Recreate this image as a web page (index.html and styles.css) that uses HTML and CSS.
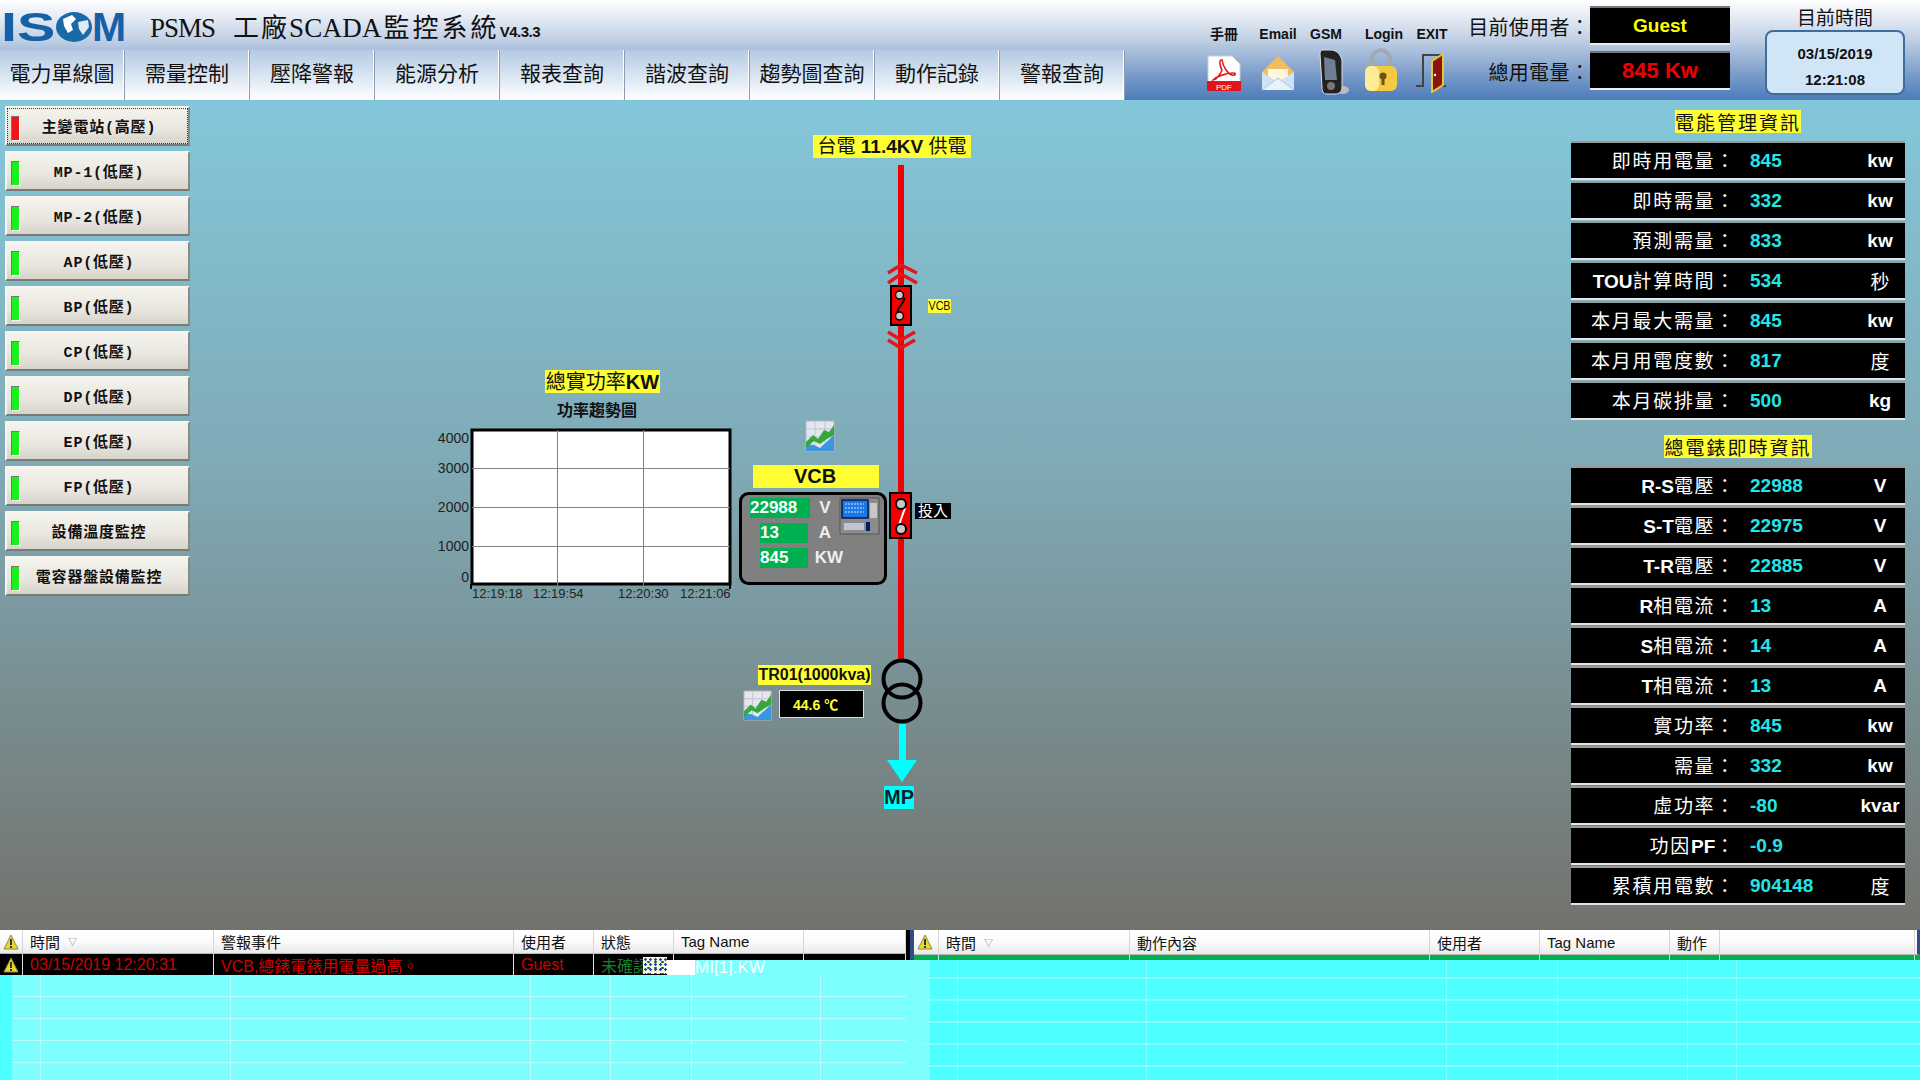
FILE: index.html
```html
<!DOCTYPE html>
<html lang="zh-Hant">
<head>
    <meta charset="UTF-8">
    <meta name="viewport" content="width=device-width, initial-scale=1.0">
    <title>PSMS 工廠SCADA監控系統</title>
    <link rel="stylesheet" href="styles.css">
</head>
<body>
    <svg class="defs" width="0" height="0">
        <symbol id="trend" viewBox="0 0 30 32">
            <rect x="1" y="1" width="28" height="30" fill="#e6e6f0" stroke="#b5b8c0"/>
            <path d="M1 9H29M1 17H29M10 1V31M20 1V31" stroke="#c2c4d6" stroke-width="1"/>
            <path d="M1 31V24L9 25L15 28L29 15V31Z" fill="#3b97dd"/>
            <path d="M1 22L8 15L13 19L19 10L24 12L29 5V15L22 19L15 24L9 21L1 28Z" fill="#35a83a"/>
        </symbol>
        <symbol id="warn" viewBox="0 0 16 16">
            <path d="M8 1L15 15H1Z" fill="#e8d92c" stroke="#8f8a3a"/>
            <rect x="7" y="5" width="2" height="6" fill="#333"/>
            <rect x="7" y="12" width="2" height="2" fill="#333"/>
        </symbol>
    </svg>

    <header class="topbar">
        <div class="topbar-left">
            <div class="brand">
                <div class="logo">
                    <span class="logo-is">IS</span>
                    <svg class="logo-globe" viewBox="0 0 38 32" width="38" height="32">
                        <ellipse cx="19" cy="16" rx="18" ry="15" fill="#1b6aa8"/>
                        <path d="M8 8L17 4L21 8L16 13L18 19L13 22L9 15Z" fill="#fff"/>
                        <path d="M23 11L33 9L34 16L28 24L24 18Z" fill="#dfeaf4"/>
                    </svg>
                    <span class="logo-m">M</span>
                </div>
                <h1 class="title"><span class="title-en">PSMS</span><span class="title-zh title-first">工廠</span><span class="title-en title-scada">SCADA</span><span class="title-zh">監控系統</span><span class="version">V4.3.3</span></h1>
            </div>
            <nav class="nav">
                <a class="nav-tab">電力單線圖</a>
                <a class="nav-tab">需量控制</a>
                <a class="nav-tab">壓降警報</a>
                <a class="nav-tab">能源分析</a>
                <a class="nav-tab">報表查詢</a>
                <a class="nav-tab">諧波查詢</a>
                <a class="nav-tab">趨勢圖查詢</a>
                <a class="nav-tab">動作記錄</a>
                <a class="nav-tab">警報查詢</a>
            </nav>
        </div>

        <div class="tools">
            <div class="tool tool-pdf">
                <span class="tool-name">手冊</span>
                <svg viewBox="0 0 34 36" width="34" height="36">
                    <path d="M1 1H25L33 9V27H1Z" fill="#fff" stroke="#ccc"/>
                    <path d="M14 5C12 5 13 12 15 15C13 20 9 25 6 25C9 22 18 18 27 18C29 18 29 21 25 20C21 19 16 12 15 5Z" fill="none" stroke="#e02020" stroke-width="1.6"/>
                    <rect x="0" y="26" width="34" height="10" fill="#e0141c"/>
                    <text x="17" y="34.5" class="pdf-text">PDF</text>
                </svg>
            </div>
            <div class="tool tool-mail">
                <span class="tool-name">Email</span>
                <svg viewBox="0 0 36 36" width="36" height="36">
                    <path d="M18 1L34 17V35H2V17Z" fill="#f2bd5e"/>
                    <path d="M8 14H28V26H8Z" fill="#fff6dd"/>
                    <path d="M2 17L18 27L34 17V35H2Z" fill="#cfe2f6"/>
                    <path d="M2 35L18 23L34 35" fill="#eaf3fc" stroke="#a9c4e4"/>
                </svg>
            </div>
            <div class="tool tool-phone">
                <span class="tool-name">GSM</span>
                <svg viewBox="0 0 30 46" width="30" height="46">
                    <ellipse cx="24" cy="41" rx="6" ry="4" fill="#bbb"/>
                    <path d="M4 1H12C18 1 22 6 23 12V38C23 43 20 45 16 45H8C4 45 3 42 3 38L1 5C1 2 2 1 4 1Z" fill="#222" stroke="#ddd"/>
                    <path d="M5 8L16 11L18 31H6Z" fill="#6d7f95"/>
                    <circle cx="12" cy="37" r="4" fill="#777"/>
                </svg>
            </div>
            <div class="tool tool-lock">
                <span class="tool-name">Login</span>
                <svg viewBox="0 0 34 44" width="34" height="44">
                    <path d="M8 20V12C8 -1 26 -1 26 12V20" fill="none" stroke="#a5a9ae" stroke-width="4"/>
                    <rect x="1" y="18" width="32" height="25" rx="6" fill="#f5ca43"/>
                    <rect x="1" y="18" width="14" height="25" rx="6" fill="#fdeb98"/>
                    <circle cx="19" cy="28" r="3.5" fill="#6d5312"/>
                    <rect x="17.5" y="29" width="3" height="8" fill="#6d5312"/>
                </svg>
            </div>
            <div class="tool tool-door">
                <span class="tool-name">EXIT</span>
                <svg viewBox="0 0 32 40" width="32" height="40">
                    <path d="M1 33H8V2H28V33H31" fill="none" stroke="#444" stroke-width="2"/>
                    <path d="M17 8L28 1V32L17 39Z" fill="#8a1414" stroke="#e9c92c" stroke-width="2"/>
                    <circle cx="20" cy="22" r="1.2" fill="#ffd"/>
                </svg>
            </div>
        </div>

        <div class="user-info">
            <span class="info-label">目前使用者：</span>
            <span class="info-box info-guest">Guest</span>
            <span class="info-label">總用電量：</span>
            <span class="info-box info-power">845 Kw</span>
        </div>

        <div class="clock">
            <div class="clock-title">目前時間</div>
            <div class="clock-box">
                <span>03/15/2019</span>
                <span>12:21:08</span>
            </div>
        </div>
    </header>

    <main class="main">
        <aside class="sidebar">
            <button class="side-btn side-active"><i class="lamp lamp-red"></i>主變電站(高壓)</button>
            <button class="side-btn"><i class="lamp"></i>MP-1(低壓)</button>
            <button class="side-btn"><i class="lamp"></i>MP-2(低壓)</button>
            <button class="side-btn"><i class="lamp"></i>AP(低壓)</button>
            <button class="side-btn"><i class="lamp"></i>BP(低壓)</button>
            <button class="side-btn"><i class="lamp"></i>CP(低壓)</button>
            <button class="side-btn"><i class="lamp"></i>DP(低壓)</button>
            <button class="side-btn"><i class="lamp"></i>EP(低壓)</button>
            <button class="side-btn"><i class="lamp"></i>FP(低壓)</button>
            <button class="side-btn"><i class="lamp"></i>設備溫度監控</button>
            <button class="side-btn"><i class="lamp"></i>電容器盤設備監控</button>
        </aside>

        <!-- 單線圖: viewBox 用畫面座標 -->
        <svg class="diagram" viewBox="195 100 1376 830" width="1376" height="830">
            <rect x="898" y="165" width="6" height="495" fill="#f00000"/>

            <rect x="813" y="135" width="158" height="23" fill="#ffff33"/>
            <text x="892" y="153" class="lbl">台電 <tspan class="b">11.4KV</tspan> 供電</text>

            <path d="M888 273L901 265L917 273M888 283L901 274L917 283" fill="none" stroke="#e8141c" stroke-width="3.5"/>
            <rect x="891" y="286" width="20" height="39" fill="#f00000" stroke="#000" stroke-width="2"/>
            <path d="M904 298C905 304 895 308 898 313" fill="none" stroke="#000" stroke-width="2"/>
            <circle cx="899.5" cy="295" r="4" fill="#c8c8c8" stroke="#000" stroke-width="1.5"/>
            <circle cx="899.5" cy="316" r="4" fill="#c8c8c8" stroke="#000" stroke-width="1.5"/>
            <path d="M888 332L901 340L915 332M888 340L901 348L915 340" fill="none" stroke="#e8141c" stroke-width="3.5"/>
            <rect x="928" y="299" width="23" height="14" fill="#ffff33"/>
            <text x="939.5" y="310" class="lbl-s" textLength="22" lengthAdjust="spacingAndGlyphs">VCB</text>

            <rect x="545" y="370" width="115" height="23" fill="#ffff33"/>
            <text x="602.5" y="389" class="lbl-m">總實功率<tspan class="b">KW</tspan></text>
            <text x="597" y="416" class="chart-title">功率趨勢圖</text>

            <rect x="472" y="430" width="258" height="154" fill="#fff" stroke="#000" stroke-width="3"/>
            <path d="M557.5 430V588M643.5 430V588M472 468.5H730M472 507.5H730M472 546.5H730" stroke="#808080" stroke-width="1"/>
            <path d="M471 584V589M730 584V589" stroke="#000" stroke-width="2"/>
            <text x="469" y="443" class="axis-y">4000</text>
            <text x="469" y="473" class="axis-y">3000</text>
            <text x="469" y="512" class="axis-y">2000</text>
            <text x="469" y="551" class="axis-y">1000</text>
            <text x="469" y="582" class="axis-y">0</text>
            <text x="472" y="598" class="axis-x">12:19:18</text>
            <text x="533" y="598" class="axis-x">12:19:54</text>
            <text x="618" y="598" class="axis-x">12:20:30</text>
            <text x="680" y="598" class="axis-x">12:21:06</text>

            <use href="#trend" x="805" y="420" width="30" height="32"/>

            <rect x="753" y="465" width="126" height="23" fill="#ffff33"/>
            <text x="815" y="483" class="lbl-b">VCB</text>

            <rect x="740.5" y="493.5" width="145" height="90" rx="8" fill="#808080" stroke="#000" stroke-width="3"/>
            <rect x="750" y="498" width="60" height="20" fill="#00b050"/>
            <rect x="760" y="523" width="48" height="20" fill="#00b050"/>
            <rect x="760" y="548" width="48" height="20" fill="#00b050"/>
            <text x="750" y="513" class="val">22988</text>
            <text x="760" y="538" class="val">13</text>
            <text x="760" y="563" class="val">845</text>
            <text x="825" y="513" class="val val-c">V</text>
            <text x="825" y="538" class="val val-c">A</text>
            <text x="829" y="563" class="val val-c">KW</text>

            <rect x="840" y="498" width="39" height="36" fill="#8c8c8c" stroke="#555"/>
            <rect x="842" y="500" width="26" height="18" fill="#1a78e8" stroke="#001a50" stroke-width="1.5"/>
            <path d="M845 504H864M845 508H864M845 512H864" stroke="#cfe4ff" stroke-dasharray="2 1"/>
            <rect x="870" y="503" width="7" height="15" fill="#c8c8c8"/>
            <rect x="844" y="523" width="20" height="7" fill="#c0c4d0"/>
            <rect x="866" y="522" width="4" height="9" fill="#001a70"/>

            <rect x="890" y="493" width="21" height="45" fill="#f00000" stroke="#000" stroke-width="2"/>
            <path d="M905 508L899 525" stroke="#fff" stroke-width="2"/>
            <circle cx="901" cy="504" r="5" fill="#c8c8c8" stroke="#000" stroke-width="2"/>
            <circle cx="901" cy="529" r="5" fill="#c8c8c8" stroke="#000" stroke-width="2"/>
            <rect x="915" y="503" width="36" height="16" fill="#000"/>
            <text x="933" y="516" class="lbl-w">投入</text>

            <rect x="758" y="665" width="113" height="20" fill="#ffff33"/>
            <text x="814.5" y="680" class="lbl-tr">TR01(1000kva)</text>
            <use href="#trend" x="743" y="690" width="29" height="31"/>
            <rect x="779.5" y="690.5" width="84" height="27" fill="#000" stroke="#ddd"/>
            <text x="793" y="710" class="temp">44.6 ℃</text>

            <circle cx="902" cy="679" r="18.5" fill="none" stroke="#000" stroke-width="4"/>
            <circle cx="902" cy="703" r="18.5" fill="none" stroke="#000" stroke-width="4"/>
            <rect x="899" y="724" width="7" height="37" fill="#00ffff"/>
            <path d="M887 760H917L902 782Z" fill="#00ffff"/>
            <rect x="884" y="786" width="30" height="23" fill="#00ffff"/>
            <text x="899" y="804" class="lbl-b lbl-mp">MP</text>
        </svg>

        <aside class="info">
            <h2 class="info-title"><span>電能管理資訊</span></h2>
            <div class="row"><span class="row-name">即時用電量：</span><span class="row-val">845</span><span class="row-unit">kw</span></div>
            <div class="row"><span class="row-name">即時需量：</span><span class="row-val">332</span><span class="row-unit">kw</span></div>
            <div class="row"><span class="row-name">預測需量：</span><span class="row-val">833</span><span class="row-unit">kw</span></div>
            <div class="row"><span class="row-name"><b>TOU</b>計算時間：</span><span class="row-val">534</span><span class="row-unit row-unit-zh">秒</span></div>
            <div class="row"><span class="row-name">本月最大需量：</span><span class="row-val">845</span><span class="row-unit">kw</span></div>
            <div class="row"><span class="row-name">本月用電度數：</span><span class="row-val">817</span><span class="row-unit row-unit-zh">度</span></div>
            <div class="row"><span class="row-name">本月碳排量：</span><span class="row-val">500</span><span class="row-unit">kg</span></div>

            <h2 class="info-title info-title-2"><span>總電錶即時資訊</span></h2>
            <div class="row"><span class="row-name"><b>R-S</b>電壓：</span><span class="row-val">22988</span><span class="row-unit">V</span></div>
            <div class="row"><span class="row-name"><b>S-T</b>電壓：</span><span class="row-val">22975</span><span class="row-unit">V</span></div>
            <div class="row"><span class="row-name"><b>T-R</b>電壓：</span><span class="row-val">22885</span><span class="row-unit">V</span></div>
            <div class="row"><span class="row-name"><b>R</b>相電流：</span><span class="row-val">13</span><span class="row-unit">A</span></div>
            <div class="row"><span class="row-name"><b>S</b>相電流：</span><span class="row-val">14</span><span class="row-unit">A</span></div>
            <div class="row"><span class="row-name"><b>T</b>相電流：</span><span class="row-val">13</span><span class="row-unit">A</span></div>
            <div class="row"><span class="row-name">實功率：</span><span class="row-val">845</span><span class="row-unit">kw</span></div>
            <div class="row"><span class="row-name">需量：</span><span class="row-val">332</span><span class="row-unit">kw</span></div>
            <div class="row"><span class="row-name">虛功率：</span><span class="row-val">-80</span><span class="row-unit">kvar</span></div>
            <div class="row"><span class="row-name">功因<b>PF</b>：</span><span class="row-val">-0.9</span><span class="row-unit"></span></div>
            <div class="row"><span class="row-name">累積用電數：</span><span class="row-val">904148</span><span class="row-unit row-unit-zh">度</span></div>
        </aside>
    </main>

    <section class="bottom">
        <div class="alarm">
            <div class="grid-row head">
                <span class="cell"><svg width="16" height="16"><use href="#warn"/></svg></span>
                <span class="cell">時間<i class="sort">▽</i></span>
                <span class="cell">警報事件</span>
                <span class="cell">使用者</span>
                <span class="cell">狀態</span>
                <span class="cell">Tag Name</span>
                <span class="cell"></span>
            </div>
            <div class="grid-row alarm-row">
                <span class="cell"><svg width="16" height="16"><use href="#warn"/></svg></span>
                <span class="cell">03/15/2019 12:20:31</span>
                <span class="cell">VCB,總錶電錶用電量過高。</span>
                <span class="cell">Guest</span>
                <span class="cell cell-status">未確認</span>
                <span class="cell"></span>
                <span class="cell"></span>
            </div>
            <div class="fill fill-left"></div>
        </div>
        <div class="divider"></div>
        <div class="action">
            <div class="grid-row head head-action">
                <span class="cell"><svg width="16" height="16"><use href="#warn"/></svg></span>
                <span class="cell">時間<i class="sort">▽</i></span>
                <span class="cell">動作內容</span>
                <span class="cell">使用者</span>
                <span class="cell">Tag Name</span>
                <span class="cell">動作</span>
                <span class="cell"></span>
            </div>
            <div class="grid-row head-action action-row">
                <span class="cell"></span><span class="cell"></span><span class="cell"></span>
                <span class="cell"></span><span class="cell"></span><span class="cell"></span><span class="cell"></span>
            </div>
            <div class="fill fill-right"></div>
        </div>
        <!-- 畫面殘影 -->
        <div class="smear"><i class="smear-noise"></i><i class="smear-white"></i><span>MI[1].KW</span></div>
    </section>
</body>
</html>
```

FILE: styles.css
```css
* {
    box-sizing: border-box;
}

html, body {
    margin: 0;
    padding: 0;
}

body {
    width: 1920px;
    height: 1080px;
    overflow: hidden;
    font-family: "Liberation Sans", "Noto Sans CJK TC", sans-serif;
    background-color: #72726c;
}

.defs {
    position: absolute;
}

/* 上方標題列 */
.topbar {
    display: flex;
    height: 100px;
    background: linear-gradient(to bottom, #ffffff 0%, #c4d2e6 38%, #7f9fcb 72%, #4c7cba 100%);
}

.topbar-left {
    width: 1207px;
    flex: none;
}

.brand {
    display: flex;
    align-items: center;
    height: 50px;
}

.logo {
    display: flex;
    align-items: center;
    width: 150px;
    height: 32px;
    margin-top: 4px;
    color: #1560a6;
    font-weight: 700;
    font-size: 41px;
    line-height: 32px;
}

.logo-is {
    display: inline-block;
    width: 38px;
    margin-left: 1px;
    transform: scaleX(1.4);
    transform-origin: left center;
}

.logo-globe {
    margin-left: 16px;
    flex: none;
}

.logo-m {
    margin-left: -1px;
}

.title {
    display: flex;
    align-items: baseline;
    margin: 0;
    font-weight: 400;
    color: #111;
}

.title-en {
    font-family: "Liberation Serif", serif;
    font-size: 27px;
    letter-spacing: -1px;
}

.title-scada {
    letter-spacing: 0.2px;
    margin-right: 2px;
}

.title-zh {
    font-family: "Noto Sans CJK TC", sans-serif;
    font-size: 26px;
    letter-spacing: 3px;
}

.title-first {
    margin-left: 18px;
    letter-spacing: 2px;
}

.version {
    font-weight: 700;
    font-size: 15px;
    letter-spacing: -0.5px;
}

.nav {
    display: flex;
    height: 50px;
}

.nav-tab {
    width: 125px;
    display: flex;
    align-items: center;
    justify-content: center;
    padding-bottom: 6px;
    font-family: "Noto Sans CJK TC", sans-serif;
    font-size: 21px;
    color: #111;
    white-space: nowrap;
    background: linear-gradient(to bottom, #b4c9e4 0%, #dce7f3 55%, #ffffff 100%);
    border-right: 1px solid #8d9db0;
    box-shadow: inset -1px 0 0 #ffffff;
}

.tools {
    display: flex;
    flex: none;
    width: 261px;
}

.tool {
    display: flex;
    flex-direction: column;
    align-items: center;
    padding-top: 24px;
}

.tool svg {
    margin-top: auto;
    margin-bottom: 9px;
    display: block;
}

.tool-name {
    font-weight: 700;
    font-size: 14px;
    line-height: 20px;
    color: #111;
}

.tool-pdf { width: 34px; margin-right: 19px; }
.tool-mail { width: 36px; margin-right: 23px; }
.tool-phone { width: 30px; margin-right: 15px; }
.tool-lock { width: 34px; margin-right: 17px; }
.tool-door { width: 32px; }

.tool-phone .tool-name { margin-right: 16px; }
.tool-lock .tool-name { margin-left: 6px; }
.tool-door .tool-name { margin-left: 2px; }

.tool-phone svg { margin-bottom: 5px; }
.tool-lock svg { margin-bottom: 8px; }
.tool-door svg { margin-bottom: 7px; }

.pdf-text {
    font-size: 8px;
    fill: #fff;
    text-anchor: middle;
}

.user-info {
    display: grid;
    grid-template-columns: 122px 140px;
    grid-auto-rows: 39px;
    row-gap: 6px;
    align-items: center;
    padding-top: 6px;
    flex: none;
}

.info-label {
    padding-top: 2px;
    font-family: "Noto Sans CJK TC", sans-serif;
    font-size: 20px;
    letter-spacing: 0.3px;
    text-align: right;
    color: #111;
    white-space: nowrap;
}

.info-box {
    height: 39px;
    line-height: 36px;
    text-align: center;
    font-weight: 700;
    background-color: #000;
    border-top: 2px solid #777;
    border-bottom: 2px solid #e8eef5;
}

.info-guest {
    color: #ffff00;
    font-size: 19px;
}

.info-power {
    color: #f00000;
    font-size: 22px;
}

.clock {
    width: 140px;
    margin-left: 35px;
    flex: none;
}

.clock-title {
    height: 30px;
    padding-top: 3px;
    text-align: center;
    font-family: "Noto Sans CJK TC", sans-serif;
    font-size: 19px;
    line-height: 28px;
    color: #111;
}

.clock-box {
    display: flex;
    flex-direction: column;
    align-items: center;
    justify-content: space-around;
    height: 65px;
    padding: 8px 0 0;
    font-weight: 700;
    font-size: 15px;
    color: #111;
    background-color: #d0e5f6;
    border: 2px solid #3f6d99;
    border-radius: 8px;
}

/* 中間區域 */
.main {
    display: flex;
    height: 830px;
    background: linear-gradient(to bottom, #84c7da 0%, #7fa9b5 45%, #72726c 100%);
}

.sidebar {
    display: flex;
    flex-direction: column;
    gap: 5px;
    width: 195px;
    flex: none;
    padding: 6px 0 0 5px;
}

.side-btn {
    position: relative;
    width: 185px;
    height: 40px;
    padding: 0 0 0 3px;
    font-family: "Liberation Mono", "Noto Sans CJK TC", sans-serif;
    font-weight: 700;
    font-size: 15px;
    letter-spacing: 0.8px;
    color: #111;
    background: linear-gradient(to bottom, #f4f3ed 0%, #e8e6df 60%, #d6d3ca 100%);
    border: 2px solid;
    border-color: #f7f7f2 #8b8b85 #7a7a75 #f7f7f2;
}

.side-active {
    outline: 1px dotted #333;
    outline-offset: -3px;
}

.lamp {
    position: absolute;
    left: 4px;
    top: 8px;
    width: 9px;
    height: 25px;
    background-color: #1cf01c;
    border: 1px solid;
    border-color: #777 #fff #fff #777;
}

.lamp-red {
    background-color: #f0141c;
}

.diagram {
    flex: none;
    display: block;
}

.diagram text {
    font-family: "Liberation Sans", "Noto Sans CJK TC", sans-serif;
}

.b {
    font-weight: 700;
}

.lbl {
    font-size: 19px;
    text-anchor: middle;
    fill: #111;
}

.lbl-m {
    font-size: 20px;
    text-anchor: middle;
    fill: #111;
}

.lbl-s {
    font-size: 12px;
    text-anchor: middle;
    fill: #111;
}

.lbl-b {
    font-size: 20px;
    font-weight: 700;
    text-anchor: middle;
    fill: #111;
}

.lbl-mp {
    fill: #06232b;
}

.lbl-w {
    font-size: 15px;
    text-anchor: middle;
    fill: #fff;
}

.lbl-tr {
    font-size: 16px;
    font-weight: 700;
    text-anchor: middle;
    fill: #111;
}

.chart-title {
    font-size: 16px;
    font-weight: 700;
    text-anchor: middle;
    fill: #111;
}

.axis-y {
    font-size: 14px;
    text-anchor: end;
    fill: #222;
}

.axis-x {
    font-size: 13px;
    fill: #222;
}

.val {
    font-size: 17px;
    font-weight: 700;
    fill: #fff;
}

.val-c {
    text-anchor: middle;
    fill: #eee;
}

.temp {
    font-size: 14px;
    font-weight: 700;
    fill: #ffff33;
}

.info {
    width: 334px;
    flex: none;
    padding-top: 10px;
}

.info-title {
    height: 23px;
    margin: 0 0 8px;
    text-align: center;
    font-family: "Noto Sans CJK TC", sans-serif;
    font-weight: 400;
    font-size: 19px;
    line-height: 23px;
    letter-spacing: 2px;
    color: #111;
}

.info-title span {
    display: inline-block;
    background-color: #ffff33;
}

.info-title-2 {
    margin: 15px 0 8px;
}

.row {
    display: grid;
    grid-template-columns: 165px 119px 50px;
    align-items: center;
    height: 39px;
    margin-bottom: 1px;
    color: #fff;
    background-color: #000;
    border-top: 2px solid #9a9a9a;
    border-bottom: 2px solid #e4e4e4;
}

.row-name {
    padding-bottom: 2px;
    text-align: right;
    font-family: "Noto Sans CJK TC", sans-serif;
    font-size: 19px;
    letter-spacing: 1.7px;
    white-space: nowrap;
}

.row-name b {
    font-family: "Liberation Sans", sans-serif;
    letter-spacing: 0;
}

.row-val {
    padding-left: 14px;
    font-weight: 700;
    font-size: 19px;
    color: #22e6e6;
}

.row-unit {
    text-align: center;
    font-weight: 700;
    font-size: 19px;
    white-space: nowrap;
}

.row-unit-zh {
    font-weight: 400;
}

/* 下方表格 */
.bottom {
    position: relative;
    display: flex;
    height: 150px;
    background: linear-gradient(to right, #7dffff 930px, #4dffff 930px);
}

.alarm {
    width: 906px;
    flex: none;
}

.divider {
    width: 8px;
    flex: none;
    height: 30px;
    background: linear-gradient(to right, #000 50%, #2d4f86 50%);
}

.action {
    flex: 1;
    min-width: 0;
}

.grid-row {
    display: grid;
    grid-template-columns: 23px 191px 300px 80px 80px 130px 102px;
}

.head {
    height: 24px;
    font-size: 15px;
    color: #111;
    background: linear-gradient(to bottom, #ffffff 0%, #fbfbfb 50%, #e9e9e9 100%);
    border-bottom: 1px solid #bbb;
}

.head-action {
    grid-template-columns: 25px 191px 300px 110px 130px 50px 195px;
}

.head-action.head {
    height: 25px;
    border-right: 3px solid #2d4f86;
}

.cell {
    display: flex;
    align-items: center;
    padding-left: 7px;
    white-space: nowrap;
    overflow: hidden;
    border-right: 1px solid #d6d6d6;
}

.cell:first-child {
    padding-left: 3px;
}

.sort {
    margin-left: 8px;
    font-style: normal;
    font-size: 9px;
    color: #777;
}

.alarm-row {
    height: 21px;
    font-size: 16px;
    color: #cc0000;
    background-color: #000;
}

.alarm-row .cell {
    border-right-color: #ddd;
}

.cell-status {
    color: #1c7c2c;
}

.action-row {
    height: 5px;
    background-color: #00b050;
}

.action-row .cell {
    border-right-color: #cfe8d8;
}

.fill-left {
    height: 105px;
    background-color: #7dffff;
    background-image:
        linear-gradient(to right, #4dffff 12px, transparent 12px),
        repeating-linear-gradient(to bottom, transparent 0, transparent 21px, #b8ffff 21px, #b8ffff 22px),
        linear-gradient(#b8ffff, #b8ffff),
        linear-gradient(#b8ffff, #b8ffff),
        linear-gradient(#b8ffff, #b8ffff),
        linear-gradient(#b8ffff, #b8ffff),
        linear-gradient(#b8ffff, #b8ffff),
        linear-gradient(#b8ffff, #b8ffff);
    background-repeat: no-repeat, repeat, no-repeat, no-repeat, no-repeat, no-repeat, no-repeat, no-repeat;
    background-size: auto, auto, 1px 100%, 1px 100%, 1px 100%, 1px 100%, 1px 100%, 1px 100%;
    background-position: 0 0, 0 0, 40px 0, 230px 0, 530px 0, 610px 0, 691px 0, 820px 0;
}

.fill-right {
    height: 120px;
    background-image:
        repeating-linear-gradient(to bottom, transparent 0, transparent 20px, #86ffff 20px, #86ffff 22px),
        linear-gradient(#86ffff, #86ffff),
        linear-gradient(#86ffff, #86ffff),
        linear-gradient(#86ffff, #86ffff),
        linear-gradient(#86ffff, #86ffff),
        linear-gradient(#86ffff, #86ffff),
        linear-gradient(#86ffff, #86ffff);
    background-repeat: repeat, no-repeat, no-repeat, no-repeat, no-repeat, no-repeat, no-repeat;
    background-size: auto, 1px 100%, 1px 100%, 1px 100%, 1px 100%, 1px 100%, 1px 100%;
    background-position: 0 -3px, 43px 0, 232px 0, 532px 0, 643px 0, 773px 0, 822px 0;
}

.smear {
    position: absolute;
    left: 667px;
    top: 30px;
    display: flex;
    align-items: center;
    width: 247px;
    height: 15px;
    font-size: 17px;
    color: #fff;
    background-color: #7dffff;
}

.smear-noise {
    position: absolute;
    left: -24px;
    top: -3px;
    width: 24px;
    height: 17px;
    background:
        radial-gradient(circle, #1a3fc0 1px, transparent 1.5px) 0 0 / 5px 5px,
        radial-gradient(circle, #0c6b2c 1px, transparent 1.5px) 2px 2px / 7px 6px,
        #f8f8dc;
}

.smear-white {
    width: 28px;
    height: 15px;
    background-color: #fff;
}
```
